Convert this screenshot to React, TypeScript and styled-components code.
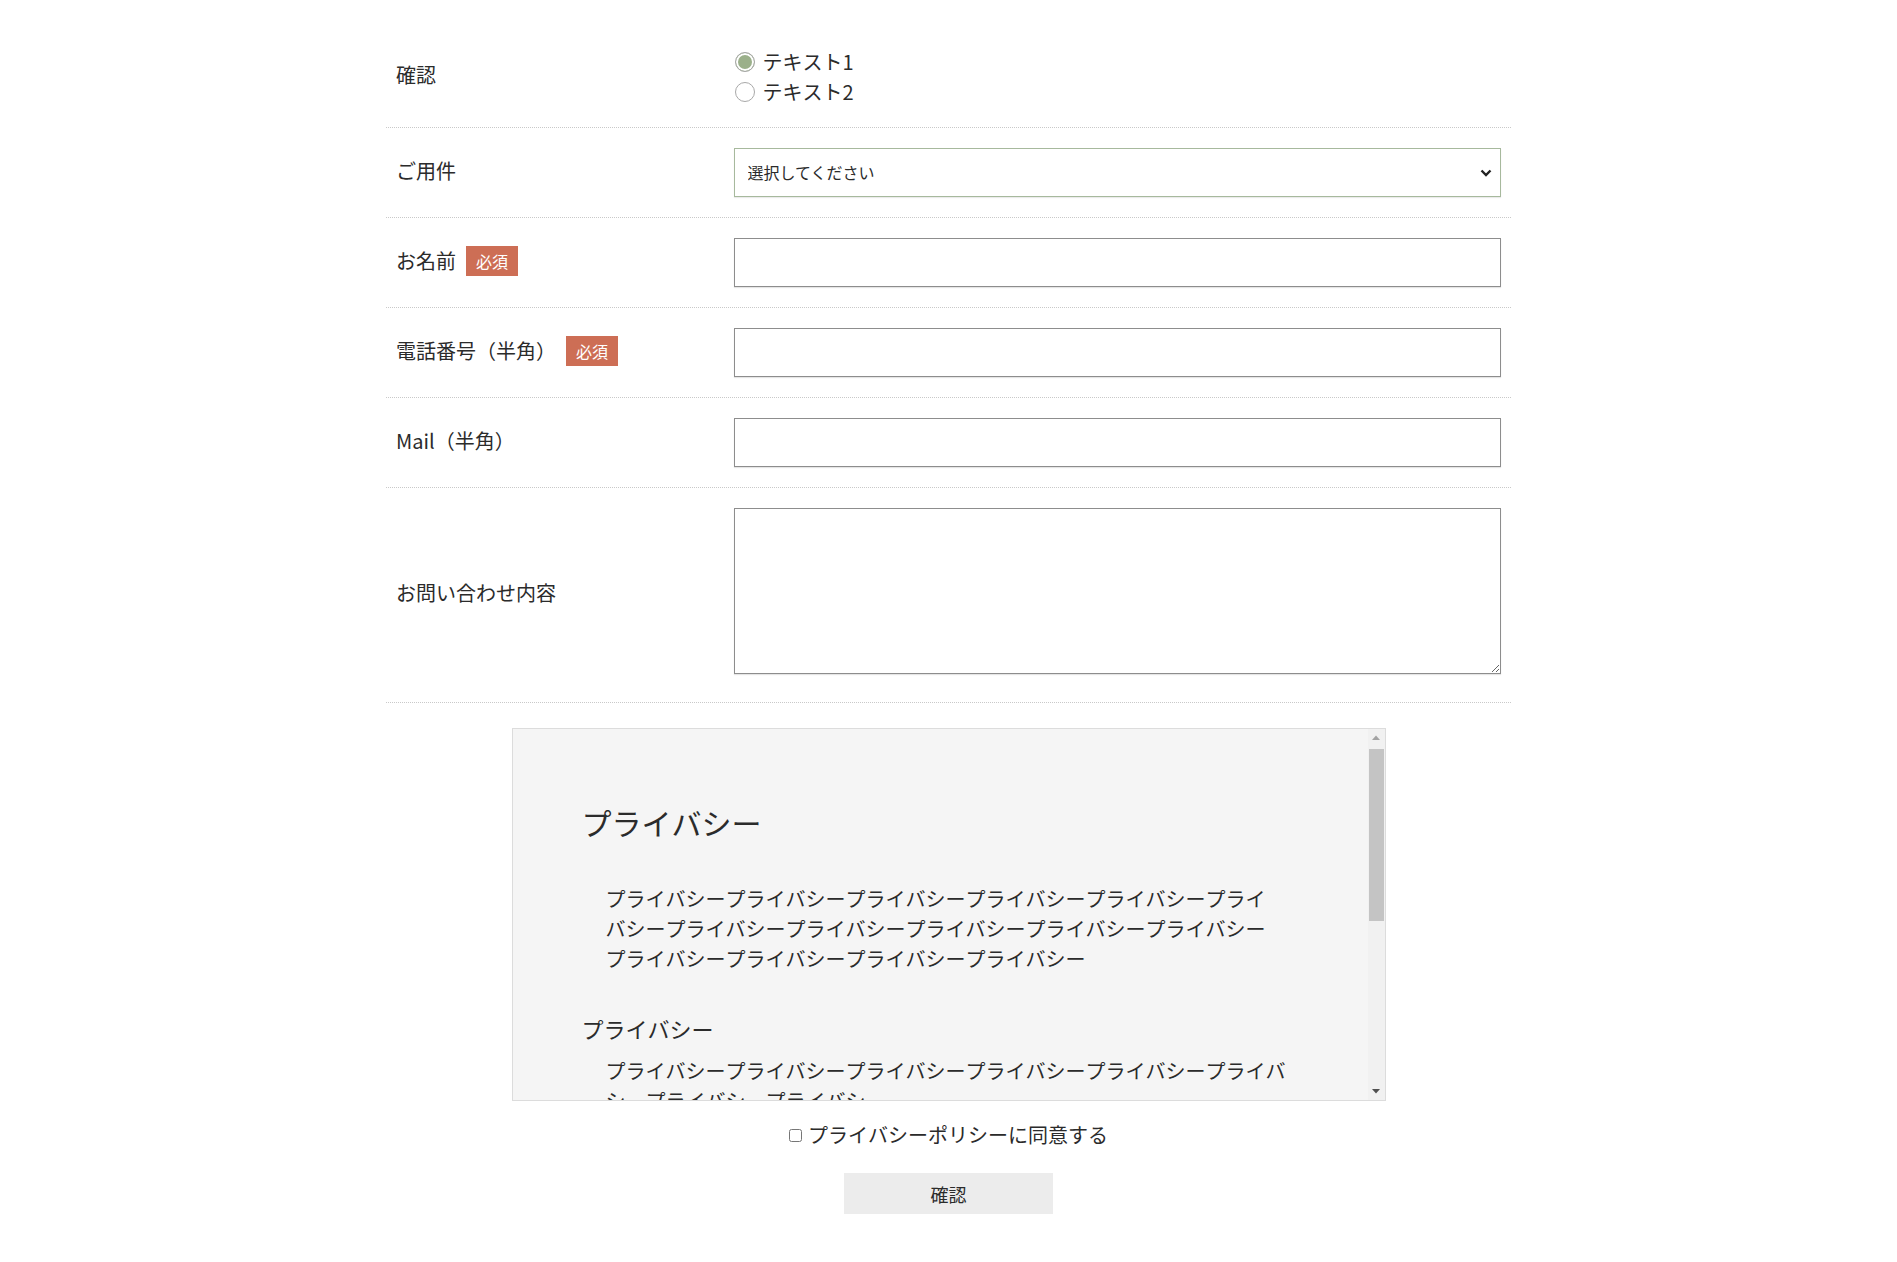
import styled, { createGlobalStyle } from 'styled-components'

// ページ全体
const GlobalStyle = createGlobalStyle`
  *, *::before, *::after {
    box-sizing: border-box;
  }
  body {
    margin: 0;
    background: #fff;
    color: #2b2b2b;
    font-family: "Noto Sans CJK JP", "Noto Sans", sans-serif;
    font-kerning: none;
  }
`

const privacyText = (times: number) => 'プライバシー'.repeat(times)

const App = () => {
  return (
    <>
      <GlobalStyle />
      <Form>
        <Row>
          <Label>確認</Label>
          <Field>
            <RadioItem>
              <Radio type="radio" name="confirm" defaultChecked />
              テキスト1
            </RadioItem>
            <RadioItem>
              <Radio type="radio" name="confirm" />
              テキスト2
            </RadioItem>
          </Field>
        </Row>
        <Row>
          <Label>ご用件</Label>
          <Field>
            <SelectWrap>
              <Select defaultValue="">
                <option value="">選択してください</option>
              </Select>
              <Chevron width="12" height="8" viewBox="0 0 12 8">
                <polyline points="1.5,1.5 6,6 10.5,1.5" fill="none" stroke="#222" strokeWidth="2.4" />
              </Chevron>
            </SelectWrap>
          </Field>
        </Row>
        <Row>
          <Label>
            お名前<Required>必須</Required>
          </Label>
          <Field>
            <TextInput type="text" />
          </Field>
        </Row>
        <Row>
          <Label>
            電話番号（半角）<Required>必須</Required>
          </Label>
          <Field>
            <TextInput type="tel" />
          </Field>
        </Row>
        <Row>
          <Label>Mail（半角）</Label>
          <Field>
            <TextInput type="email" />
          </Field>
        </Row>
        <Row>
          <Label>お問い合わせ内容</Label>
          <Field $tall>
            <TextArea />
          </Field>
        </Row>

        <PolicyFrame>
          <PolicyScroll>
            <PolicyTitle>プライバシー</PolicyTitle>
            <PolicyText $indentRight>{privacyText(15)}</PolicyText>
            <PolicySub>プライバシー</PolicySub>
            <PolicyText>{privacyText(8)}</PolicyText>
            <PolicySub>プライバシー</PolicySub>
            <PolicyText>{privacyText(10)}</PolicyText>
          </PolicyScroll>
          <ScrollTrack aria-hidden="true">
            <ScrollArrow>
              <svg width="8" height="5" viewBox="0 0 8 5">
                <polygon points="0,5 4,0.5 8,5" fill="#a3a3a3" />
              </svg>
            </ScrollArrow>
            <ScrollThumb />
            <ScrollArrow $end>
              <svg width="8" height="5" viewBox="0 0 8 5">
                <polygon points="0,0 8,0 4,4.5" fill="#505050" />
              </svg>
            </ScrollArrow>
          </ScrollTrack>
        </PolicyFrame>

        <Agree>
          <CheckBox type="checkbox" />
          プライバシーポリシーに同意する
        </Agree>
        <SubmitButton type="button">確認</SubmitButton>
      </Form>
    </>
  )
}

// フォーム
const Form = styled.form`
  width: 1125px;
  margin: 0 auto;
  padding: 27px 0 60px;
`

const Row = styled.div`
  display: grid;
  grid-template-columns: 30% 70%;
  align-items: center;
  border-bottom: 1px dotted #c9c9c9;
`

const Label = styled.div`
  display: flex;
  align-items: center;
  padding: 18px 10px 22px;
  font-size: 20px;
  line-height: 30px;
`

const Required = styled.span`
  display: inline-block;
  margin-left: 10px;
  padding: 0 10px;
  background: #cd6e55;
  color: #fff;
  font-size: 16px;
  line-height: 30px;
`

const Field = styled.div<{ $tall?: boolean }>`
  padding: 20px 10px ${(p) => (p.$tall ? '28px' : '20px')};
`

const RadioItem = styled.label`
  display: flex;
  align-items: center;
  font-size: 20px;
  line-height: 30px;
`

const Radio = styled.input`
  appearance: none;
  width: 20px;
  height: 20px;
  margin: 0 8px 0 1px;
  border: 1px solid #a8a8a8;
  border-radius: 50%;
  background: #fff;

  &:checked {
    background: #9bb08a;
    box-shadow: inset 0 0 0 2px #fff;
  }
`

const SelectWrap = styled.div`
  position: relative;
`

const Select = styled.select`
  appearance: none;
  display: block;
  width: 100%;
  height: 49px;
  padding: 0 40px 2px 13px;
  border: 1px solid #a7b99d;
  border-radius: 0;
  background: #fff;
  color: #2b2b2b;
  font-family: inherit;
  font-size: 16px;
  box-shadow: 0 1px 1px rgba(0, 0, 0, 0.08);
`

const Chevron = styled.svg`
  position: absolute;
  right: 9px;
  top: 21px;
  pointer-events: none;
`

const TextInput = styled.input`
  display: block;
  width: 100%;
  height: 49px;
  padding: 0 12px;
  border: 1px solid #8d8d8d;
  border-radius: 0;
  font-family: inherit;
  font-size: 16px;
  box-shadow: 0 1px 1px rgba(0, 0, 0, 0.1);
`

const TextArea = styled.textarea`
  display: block;
  width: 100%;
  height: 166px;
  padding: 10px 12px;
  border: 1px solid #8d8d8d;
  border-radius: 0;
  font-family: inherit;
  font-size: 16px;
  box-shadow: 0 1px 1px rgba(0, 0, 0, 0.1);
`

// プライバシーポリシー
const PolicyFrame = styled.div`
  display: flex;
  width: 874px;
  height: 373px;
  margin: 25px auto 0;
  border: 1px solid #dcdcdc;
  background: #f5f5f5;
`

const PolicyScroll = styled.div`
  flex: 1;
  min-width: 0;
  padding: 70px 69px;
  overflow-y: auto;
  scrollbar-width: none;
`

const ScrollTrack = styled.div`
  display: flex;
  flex-direction: column;
  flex: 0 0 17px;
  background: #f1f1f1;
`

const ScrollArrow = styled.div<{ $end?: boolean }>`
  display: flex;
  align-items: center;
  justify-content: center;
  height: 17px;
  margin-top: ${(p) => (p.$end ? 'auto' : '0')};

  svg {
    display: block;
  }
`

const ScrollThumb = styled.div`
  height: 172px;
  margin: 3px 1px 0;
  background: #c4c4c4;
`

const PolicyTitle = styled.h2`
  margin: 0 0 39px;
  font-size: 30px;
  font-weight: 400;
  line-height: 46px;
`

const PolicySub = styled.h3`
  margin: 38px 0 11px;
  font-size: 22px;
  font-weight: 400;
  line-height: 33px;
`

const PolicyText = styled.p<{ $indentRight?: boolean }>`
  margin: 0 ${(p) => (p.$indentRight ? '24px' : '0')} 0 24px;
  font-size: 20px;
  line-height: 30px;
`

const Agree = styled.label`
  display: flex;
  justify-content: center;
  align-items: center;
  margin-top: 19px;
  font-size: 20px;
  line-height: 30px;
`

const CheckBox = styled.input`
  width: 13px;
  height: 13px;
  margin: 0 6px 0 0;
`

const SubmitButton = styled.button`
  display: block;
  width: 209px;
  height: 41px;
  margin: 23px auto 0;
  border: none;
  background: #ececec;
  color: #2b2b2b;
  font-family: inherit;
  font-size: 18px;
  line-height: 41px;
`

export default App
